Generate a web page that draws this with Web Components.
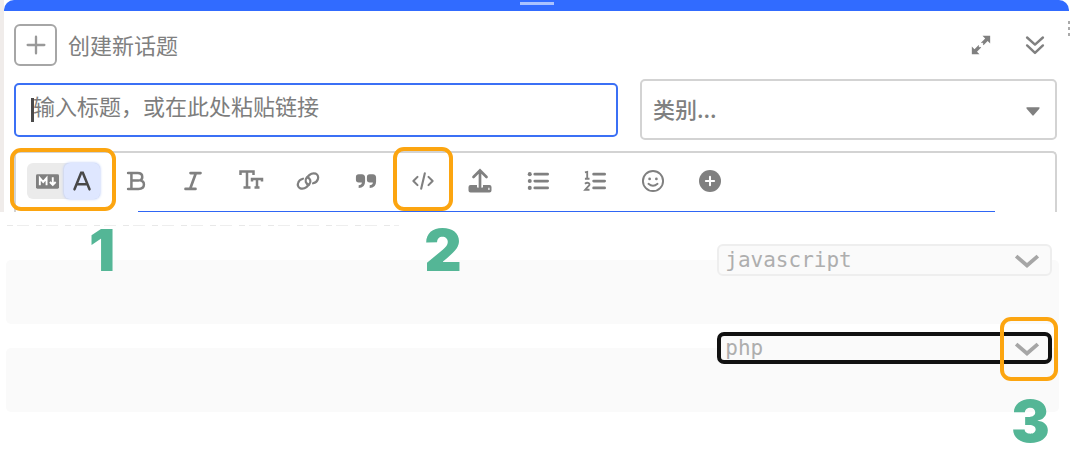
<!DOCTYPE html>
<html lang="zh-CN">
<head>
<meta charset="utf-8">
<title>创建新话题</title>
<style>
body{margin:0;background:#fff;color:#808080;font-family:"Noto Sans CJK SC",sans-serif;font-size:22px}
</style>
</head>
<body>
<tutorial-page></tutorial-page>
<script>
const define = (name, html, setup) => customElements.define(name, class extends HTMLElement {
  constructor() {
    super();
    const t = document.createElement('template');
    t.innerHTML = html;
    this.attachShadow({mode: 'open'}).append(t.content.cloneNode(true));
  }
  connectedCallback() { if (setup) setup(this, this.shadowRoot); }
});

/* Icons are drawn on a 24 x 24 grid */
const icons = {
  bold: '<path d="M2.500 2.500h11.500q5.500 0 5.500 4.600q0 3.200-3 4.100q5 .800 5 5Q21.500 21.500 15 21.500H2.500M6.500 3v18M6.500 11.500H15" fill="none" stroke="currentColor" stroke-width="3" stroke-linecap="round"/>',
  italic: '<path d="M9 2.500h12M3 21.500h12M15.500 2.500L8.500 21.500" fill="none" stroke="currentColor" stroke-width="3.200" stroke-linecap="round"/>',
  size: '<path d="M1.500 6V2.500h13V6M8 2.500v16M4.500 18.500h7M13 12.500V10h10v2.500M18 10v8.500M15.500 18.500h5" fill="none" stroke="currentColor" stroke-width="2.500"/>',
  link: '<g fill="none" stroke="currentColor" stroke-width="2.400" stroke-linecap="round"><path d="M12.800 16a4.600 4.600 0 0 1-2.300-7.500l3.200-3.200q3-2.500 6.800-1.300q3.500 2.200 2.300 6q-1 3.500-5.300 4.500"/><path d="M11.200 8a4.600 4.600 0 0 1 2.300 7.500l-3.200 3.200q-3 2.500-6.800 1.300q-3.500-2.200-2.300-6q1-3.500 5.300-4.500"/></g>',
  quote: '<path d="M4 4.500h3.500Q11 4.500 11 8.500v4q0 7-7 7v-3q3.300 0 3.500-3H4q-3 0-3-3v-3q0-3 3-3zM16 4.500h3.500q3.500 0 3.500 4v4q0 7-7 7v-3q3.300 0 3.500-3H16q-3 0-3-3v-3q0-3 3-3z" fill="currentColor"/>',
  code: '<path d="M6 7.500L1.500 12l4.500 4.500M18 7.500l4.500 4.500-4.500 4.500M14 3.500L10 20.500" fill="none" stroke="currentColor" stroke-width="2.300" stroke-linecap="round" stroke-linejoin="round"/>',
  upload: '<path d="M12 18V2M5.500 8L12 1.500 18.500 8" fill="none" stroke="currentColor" stroke-width="2.700" stroke-linecap="round"/><path fill-rule="evenodd" d="M2.500 16H9v2.500h6V16h6.500q2 0 2 2v3.500q0 2-2 2h-19q-2 0-2-2V18q0-2 2-2zM20.300 18.800v2.200h1.200v-2.200z" fill="currentColor"/>',
  list: '<g fill="currentColor"><circle cx="3" cy="4.500" r="2.200"/><circle cx="3" cy="12" r="2.200"/><circle cx="3" cy="19.500" r="2.200"/></g><path d="M8.500 4.500H22.500M8.500 12H22.500M8.500 19.500H22.500" stroke="currentColor" stroke-width="3" stroke-linecap="round"/>',
  ordered: '<path d="M10.500 4.500H22.500M10.500 12H22.500M10.500 19.500H22.500" stroke="currentColor" stroke-width="3" stroke-linecap="round"/><path d="M1 2.500l2.500-.500v7M1 9.500h5M1 15q2.500-2 4.300-.500T4.500 18L1.300 21.500H6" fill="none" stroke="currentColor" stroke-width="2"/>',
  smile: '<circle cx="12" cy="12" r="11" fill="none" stroke="currentColor" stroke-width="2.100"/><circle cx="8.300" cy="9.700" r="1.500" fill="currentColor"/><circle cx="15.700" cy="9.700" r="1.500" fill="currentColor"/><path d="M7 15q5 4.500 10 0" fill="none" stroke="currentColor" stroke-width="2" stroke-linecap="round"/>',
  more: '<circle cx="12" cy="12" r="12" fill="currentColor"/><path d="M12 7.500v9M7.500 12h9" stroke="#fff" stroke-width="2.200" stroke-linecap="round"/>',
  plus: '<path d="M12 2v20M2 12h20" stroke="#999" stroke-width="2.800" stroke-linecap="round"/>',
  expand: '<path d="M13.800 1H23v9.200l-3-3-5 5-3-3 5-5zM1 13.800V23h9.200l-3-3 5-5-3-3-5 5z" fill="currentColor"/><path d="M9.800 14.200l4.400-4.400" stroke="#fff" stroke-width="2.500"/>',
  collapse: '<path d="M2.500 3L12 11.500 21.500 3M2.500 12.500L12 21.500l9.500-9" fill="none" stroke="currentColor" stroke-width="2.900" stroke-linecap="round" stroke-linejoin="round"/>',
  caret: '<path d="M3.500 6.500h17q2.500 0 1 2L13 18.500q-1 1-2 0L2.500 8.500q-1.500-2 1-2z" fill="currentColor"/>',
  chevron: '<path d="M2 7.500l10 8.700 10-8.700" fill="none" stroke="currentColor" stroke-width="3.500"/>',
  markdown: '<rect x="0" y="4.500" width="24" height="15" rx="1.500" fill="currentColor"/><path d="M4 16V8.500l3.500 4 3.500-4V16M17.500 7.500v7M14.500 12.500l3 3 3-3" fill="none" stroke="#fff" stroke-width="2"/>',
  letter: '<path d="M3 22L11 2h2l8 20M6 16h12" fill="none" stroke="currentColor" stroke-width="3" stroke-linecap="round"/>'
};

define('ui-icon', `<style>:host{display:block;width:24px;height:24px;flex:none}svg{display:block;width:100%;height:100%;overflow:visible}</style><svg viewBox="0 0 24 24" aria-hidden="true"></svg>`,
  (el, root) => root.querySelector('svg').innerHTML = icons[el.getAttribute('name')]);

define('icon-button', `<style>
:host{display:flex;justify-content:center}
button{all:unset;display:flex;align-items:center;justify-content:center;height:36px;cursor:pointer}
ui-icon{width:var(--icon,22px);height:var(--icon,22px)}
</style><button type="button"><ui-icon></ui-icon></button>`,
  (el, root) => {
    root.querySelector('ui-icon').setAttribute('name', el.getAttribute('name'));
    root.querySelector('ui-icon').connectedCallback();
    root.querySelector('button').setAttribute('aria-label', el.getAttribute('label'));
  });

/* Orange frame around its slotted content; --out sets how far it extends */
define('high-light', `<style>
:host{display:block;position:relative}
i{position:absolute;inset:var(--out);border:4px solid #fca510;border-radius:11px;pointer-events:none;z-index:2}
b{position:absolute;left:var(--num-x);top:var(--num-y);font:900 58px/58px Inter,sans-serif;color:#54b696;z-index:3}
</style><slot></slot><i></i><b></b>`,
  (el, root) => root.querySelector('b').textContent = el.getAttribute('step'));

define('composer-header', `<style>
:host{display:flex;align-items:center;padding:13px 12px 0 0;height:42px}
.new{all:unset;box-sizing:border-box;width:43px;height:42px;border:2px solid #a6a6a6;border-radius:6px;display:grid;place-items:center;cursor:pointer}
.new ui-icon{width:20px;height:20px}
h1{margin:0 auto 0 11px;padding-bottom:2px;font-size:22px;line-height:32px;font-weight:400;color:#808080}
.tools{display:flex;gap:34px}
icon-button{--icon:20px}
</style>
<button class="new" type="button" aria-label="新建"><ui-icon name="plus"></ui-icon></button>
<h1>创建新话题</h1>
<div class="tools"><icon-button name="expand" label="全屏"></icon-button><icon-button name="collapse" label="收起"></icon-button></div>`);

define('title-field', `<style>
:host{display:block;position:relative}
input{box-sizing:border-box;display:block;width:100%;height:54px;border:2px solid #3b70f5;border-radius:5px;padding:0 17px 9px;font:22px "Noto Sans CJK SC",sans-serif;background:#fff;outline:0}
input::placeholder{color:#7d7d7d;opacity:1}
i{position:absolute;left:17px;top:15px;width:3px;height:24px;background:#4a4a4a}
</style><input type="text" aria-label="标题" placeholder="输入标题，或在此处粘贴链接"><i></i>`);

define('category-field', `<style>
:host{display:block;position:relative}
select{appearance:none;box-sizing:border-box;display:block;width:100%;height:61px;border:2px solid #d3d3d3;border-radius:5px;padding:0 11px 4px;font:500 22px "Noto Sans CJK SC",sans-serif;color:#808080;background:#fff}
ui-icon{position:absolute;right:16px;top:24px;width:16px;height:16px;pointer-events:none}
</style><select aria-label="类别"><option>类别...</option></select><ui-icon name="caret"></ui-icon>`);

define('mode-switch', `<style>
:host{display:block}
div{display:flex;height:36px;width:73px;background:#ebebeb;border-radius:6px}
button{all:unset;flex:1;display:grid;place-items:center;cursor:pointer}
button+button{background:#dfe7ff;border-radius:6px;box-shadow:0 0 3px #a9bdf5;color:#484848}
.m{width:23px;height:23px;margin-left:4px}.a{width:20px;height:20px}
</style><div><button type="button" aria-label="Markdown"><ui-icon class="m" name="markdown"></ui-icon></button><button type="button" aria-label="富文本"><ui-icon class="a" name="letter"></ui-icon></button></div>`);

define('editor-toolbar', `<style>
:host{display:flex;align-items:center;padding:10px 0 0 11px}
.mode{--out:-15px -16px -12px -17px;--num-x:62px;--num-y:58px}
.items{display:grid;grid-template-columns:repeat(11,1fr);flex:0 1 632px;margin-left:7px}
.code{--out:-16px -1px -12px -1px;--num-x:30px;--num-y:58px}
icon-button[name=size],icon-button[name=upload]{--icon:24px}
icon-button[name=bold],icon-button[name=italic]{--icon:20px}
</style>
<high-light class="mode" step="1"><mode-switch></mode-switch></high-light>
<div class="items">
<icon-button name="bold" label="粗体"></icon-button><icon-button name="italic" label="斜体"></icon-button><icon-button name="size" label="标题"></icon-button><icon-button name="link" label="链接"></icon-button><icon-button name="quote" label="引用"></icon-button>
<high-light class="code" step="2"><icon-button name="code" label="代码"></icon-button></high-light>
<icon-button name="upload" label="上传"></icon-button><icon-button name="list" label="列表"></icon-button><icon-button name="ordered" label="编号列表"></icon-button><icon-button name="smile" label="表情"></icon-button><icon-button name="more" label="更多"></icon-button>
</div>`);

define('topic-composer', `<style>
:host{display:block;position:relative;padding:0 1px 0 4px;background:linear-gradient(90deg,#f0ecea 4px,#fff 4px)}
.grip{height:11px;background:#316bff;border-radius:10px 10px 0 0;display:flex;justify-content:center}
.grip::before{content:"";width:34px;height:3px;margin-top:2px;background:#a9c2ff}
.body{background:#fff;padding:0 12px 0 10px}
.fields{display:grid;grid-template-columns:604fr 417fr;gap:22px;align-items:center;margin-top:13px}
.editor{margin-top:11px;border:2px solid #d3d3d3;border-bottom:0;border-radius:5px 5px 0 0}
.focus{height:1px;margin:12px 60px 0 122px;background:#2f66f5}
.behind{position:absolute;right:0;top:21px;width:2px;height:16px;background:repeating-linear-gradient(#aaa 0 3px,#fff 3px 6px)}
</style>
<div class="grip"></div>
<div class="body"><composer-header></composer-header>
<div class="fields"><title-field></title-field><category-field></category-field></div>
<div class="editor"><editor-toolbar></editor-toolbar><div class="focus"></div></div></div><div class="behind"></div>`);

define('code-block', `<style>
:host{display:block;box-sizing:border-box;height:64px;background:#fafafa;border-radius:5px;padding-right:7px}
.lang{position:relative;width:32%;min-width:200px;margin-left:auto;transform:translateY(-50%)}
select{appearance:none;box-sizing:border-box;display:block;width:100%;height:32px;border:2px solid #eee;border-radius:6px;padding:0 6px;background:#fafafa;color:#aeaeae;opacity:1;font:21px "DejaVu Sans Mono",monospace}
:host([active]) select{border:4px solid #111;padding:0 4px;border-radius:7px}
high-light,.arrow{position:absolute;right:12px;top:4px}
high-light{--out:-19px -18px -19px -14px;--num-x:-3px;--num-y:56px}
ui-icon{width:26px;height:26px;color:#a6a6a6}
.arrow{pointer-events:none}
</style><div class="lang"><select aria-label="语言"><option></option></select><div class="arrow"><ui-icon name="chevron"></ui-icon></div></div>`,
  (el, root) => {
    root.querySelector('option').textContent = el.getAttribute('language');
    if (el.hasAttribute('step')) {
      const mark = document.createElement('high-light');
      mark.setAttribute('step', el.getAttribute('step'));
      mark.append(root.querySelector('ui-icon'));
      root.querySelector('.arrow').replaceWith(mark);
    }
  });

define('tutorial-page', `<style>
:host{display:block}
.cut{height:1px;margin:13px 0 0 7px;width:392px;background:repeating-linear-gradient(90deg,#e8e8e8 0 6px,#fff 6px 10px,#eee 10px 22px,#fff 22px 29px)}
.blocks{display:grid;gap:24px;margin:34px 11px 56px 6px}
</style><topic-composer></topic-composer><div class="cut"></div>
<div class="blocks"><code-block language="javascript"></code-block><code-block language="php" active step="3"></code-block></div>`);
</script>
</body>
</html>
